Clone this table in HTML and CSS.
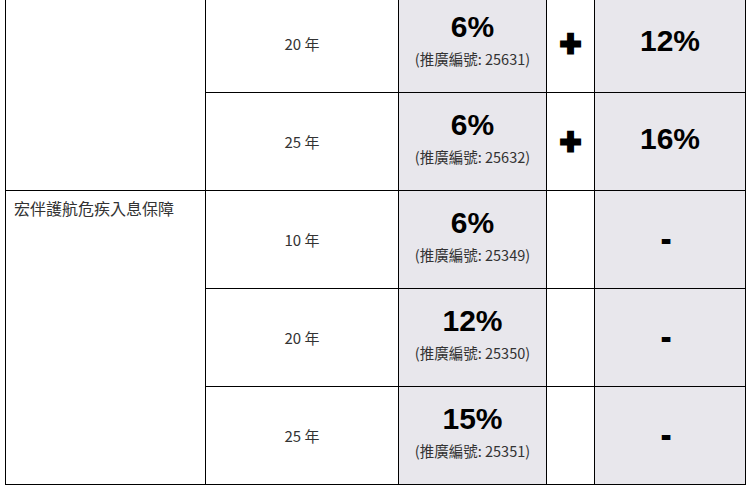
FILE: index.html
```html
<!DOCTYPE html>
<html>
<head>
<meta charset="utf-8">
<link rel="stylesheet" href="styles.css">
</head>
<body>
<table class="rates">
  <colgroup>
    <col class="c-plan"><col class="c-term"><col class="c-rate"><col class="c-plus"><col class="c-extra">
  </colgroup>
  <tr>
    <td class="plan" rowspan="2"></td>
    <td class="term">20 年</td>
    <td class="rate"><div class="stack"><div class="big">6%</div><div class="code">(推廣編號: 25631)</div></div></td>
    <td class="plus">+</td>
    <td class="extra"><div class="solo big">12%</div></td>
  </tr>
  <tr>
    <td class="term">25 年</td>
    <td class="rate"><div class="stack"><div class="big">6%</div><div class="code">(推廣編號: 25632)</div></div></td>
    <td class="plus">+</td>
    <td class="extra"><div class="solo big">16%</div></td>
  </tr>
  <tr>
    <td class="plan" rowspan="3">宏伴護航危疾入息保障</td>
    <td class="term">10 年</td>
    <td class="rate"><div class="stack"><div class="big">6%</div><div class="code">(推廣編號: 25349)</div></div></td>
    <td class="plus"></td>
    <td class="extra"><div class="dash">-</div></td>
  </tr>
  <tr>
    <td class="term">20 年</td>
    <td class="rate"><div class="stack"><div class="big">12%</div><div class="code">(推廣編號: 25350)</div></div></td>
    <td class="plus"></td>
    <td class="extra"><div class="dash">-</div></td>
  </tr>
  <tr>
    <td class="term">25 年</td>
    <td class="rate"><div class="stack"><div class="big">15%</div><div class="code">(推廣編號: 25351)</div></div></td>
    <td class="plus"></td>
    <td class="extra"><div class="dash">-</div></td>
  </tr>
</table>
</body>
</html>
```
FILE: styles.css
```css
html, body {
  margin: 0;
  padding: 0;
  background: #fff;
}
body {
  font-family: "Noto Sans CJK TC", "Noto Sans", sans-serif;
  color: #333;
}
.rates {
  margin: -6px 0 0 5px;
  border-collapse: collapse;
  table-layout: fixed;
  width: 740px;
}
.c-plan { width: 200px; }
.c-term { width: 193px; }
.c-rate { width: 148px; }
.c-plus { width: 48px; }
.c-extra { width: 151px; }
.rates td {
  border: 1px solid #000;
  height: 97px;
  padding: 0;
  text-align: center;
  vertical-align: middle;
}
.rates td.plan {
  text-align: left;
  vertical-align: top;
  padding: 6px 8px;
  font-size: 16px;
  line-height: 22px;
  color: #333;
}
.term {
  font-size: 15px;
  color: #333;
}
.rate, .extra {
  background: #e8e7ec;
}
.stack {
  padding-bottom: 7px;
}
.big {
  font-family: "Liberation Sans", Arial, sans-serif;
  font-weight: bold;
  font-size: 30px;
  line-height: 34px;
  color: #000;
  margin-bottom: 4px;
}
.solo {
  margin-bottom: 0;
  padding-bottom: 5px;
}
.code {
  font-size: 14.5px;
  line-height: 22px;
  color: #333;
}
.plus {
  font-family: "Liberation Sans", Arial, sans-serif;
  font-weight: bold;
  font-size: 36px;
  color: #000;
  -webkit-text-stroke: 3px #000;
}
.dash {
  font-family: "Liberation Sans", Arial, sans-serif;
  font-weight: bold;
  font-size: 26px;
  color: #000;
  -webkit-text-stroke: 2px #000;
  padding-right: 8px;
}
```
